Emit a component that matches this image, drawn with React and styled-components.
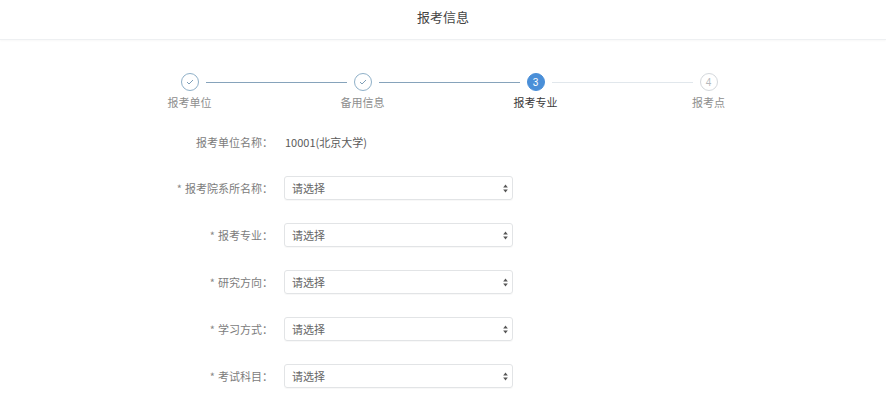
import React from "react";
import styled, { createGlobalStyle } from "styled-components";

const Global = createGlobalStyle`
  html, body { margin: 0; padding: 0; background: #fff; }
  body { font-family: "Noto Sans CJK SC", "Noto Sans", "Liberation Sans", sans-serif; }
`;

const Page = styled.div`
  width: 886px;
  height: 400px;
  overflow: hidden;
  background: #fff;
`;

const Header = styled.div`
  height: 40px;
  display: flex;
  align-items: center;
  justify-content: center;
  font-size: 13px;
  color: #444;
  border-bottom: 1px solid #eef0f2;
  box-shadow: 0 1px 2px rgba(0, 0, 0, 0.03);
  padding-bottom: 6px;
  box-sizing: border-box;
`;

const Steps = styled.div`
  display: flex;
  margin: 33px 0 0 103px;
`;

const Step = styled.div`
  width: 173px;
  display: flex;
  flex-direction: column;
  align-items: center;
`;

const Track = styled.div`
  width: 100%;
  height: 18px;
  display: flex;
  align-items: center;
`;

const Line = styled.div`
  flex: 1;
  height: 1px;
  background: ${(p) => (p.$hidden ? "transparent" : p.$done ? "#86a3bb" : "#e1e7ec")};
  margin: ${(p) => (p.$side === "left" ? "0 7px 0 0" : "0 0 0 7px")};
`;

const Circle = styled.div`
  width: 18px;
  height: 18px;
  box-sizing: border-box;
  border-radius: 50%;
  display: flex;
  align-items: center;
  justify-content: center;
  font-size: 10px;
  font-family: "Liberation Sans", sans-serif;
  border: 1px solid
    ${(p) => (p.$state === "done" ? "#8fb0c8" : p.$state === "active" ? "#4a8fd8" : "#d4d8dc")};
  background: ${(p) => (p.$state === "active" ? "#4a8fd8" : "#fff")};
  color: ${(p) => (p.$state === "active" ? "#fff" : "#b5b9bd")};
`;

const StepLabel = styled.div`
  margin-top: 4px;
  font-size: 11px;
  line-height: 14px;
  color: ${(p) => (p.$active ? "#3a3a3a" : "#8e8e8e")};
`;

const Form = styled.div`
  margin-top: 21px;
  display: flex;
  flex-direction: column;
  gap: 23px;
`;

const Row = styled.div`
  display: flex;
  align-items: center;
  height: 24px;
  margin-bottom: ${(p) => (p.$first ? "-1px" : "0")};
`;

const Label = styled.div`
  width: 273px;
  text-align: right;
  font-size: 11px;
  color: #7c7c7c;
  flex-shrink: 0;
`;

const Star = styled.span`
  color: #8a8a8a;
  margin-right: 3px;
`;

const Value = styled.div`
  margin-left: 12px;
  font-size: 11px;
  color: #5a5a5a;
`;

const Select = styled.div`
  margin-left: 11px;
  width: 229px;
  height: 24px;
  box-sizing: border-box;
  border: 1px solid #e2e4e6;
  border-radius: 3px;
  box-shadow: 0 1px 1px rgba(0, 0, 0, 0.03);
  display: flex;
  align-items: center;
  justify-content: space-between;
  padding: 0 4px 0 7px;
  font-size: 11px;
  color: #666;
`;

const Arrows = () => (
  <svg width="5" height="9" viewBox="0 0 5 9">
    <path d="M2.5 0.5 L4.8 3.6 L0.2 3.6 Z" fill="#555" />
    <path d="M2.5 8.5 L4.8 5.4 L0.2 5.4 Z" fill="#555" />
  </svg>
);

const Check = () => (
  <svg width="8" height="6" viewBox="0 0 8 6">
    <path d="M1 3 L3 5 L7 1" fill="none" stroke="#7f9fb8" strokeWidth="1" />
  </svg>
);

const steps = [
  { label: "报考单位", state: "done" },
  { label: "备用信息", state: "done" },
  { label: "报考专业", state: "active", n: 3 },
  { label: "报考点", state: "todo", n: 4 },
];

const fields = ["报考院系所名称", "报考专业", "研究方向", "学习方式", "考试科目"];

export default function App() {
  return (
    <Page>
      <Global />
      <Header>报考信息</Header>
      <Steps>
        {steps.map((s, i) => (
          <Step key={s.label}>
            <Track>
              <Line $side="left" $hidden={i === 0} $done={i <= 2} />
              <Circle $state={s.state}>{s.state === "done" ? <Check /> : s.n}</Circle>
              <Line $side="right" $hidden={i === steps.length - 1} $done={i < 2} />
            </Track>
            <StepLabel $active={s.state === "active"}>{s.label}</StepLabel>
          </Step>
        ))}
      </Steps>
      <Form>
        <Row $first>
          <Label>报考单位名称：</Label>
          <Value>10001(北京大学)</Value>
        </Row>
        {fields.map((f) => (
          <Row key={f}>
            <Label>
              <Star>*</Star>
              {f}：
            </Label>
            <Select>
              <span>请选择</span>
              <Arrows />
            </Select>
          </Row>
        ))}
      </Form>
    </Page>
  );
}
